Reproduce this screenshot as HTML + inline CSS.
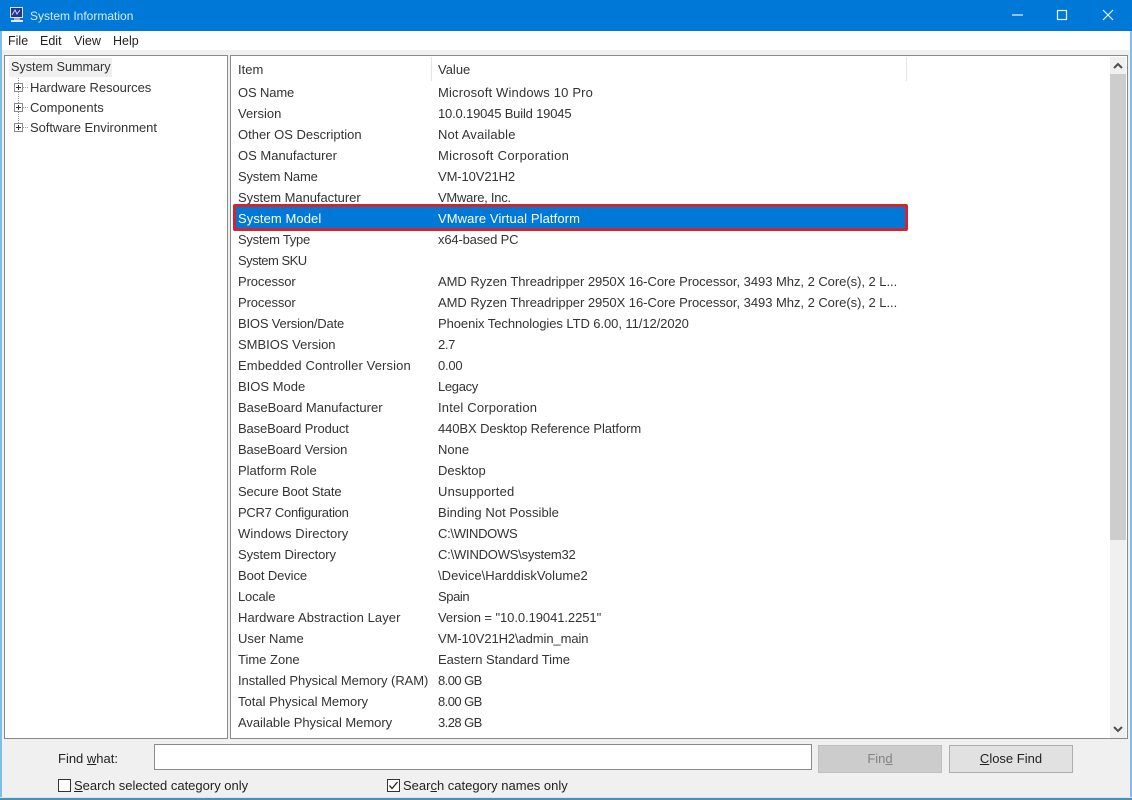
<!DOCTYPE html>
<html><head><meta charset="utf-8"><title>System Information</title>
<style>
*{box-sizing:border-box}
html,body{margin:0;padding:0;width:1132px;height:800px;overflow:hidden;background:#f0f0f0;font-family:"Liberation Sans",sans-serif;font-size:13px;color:#333}
.a{position:absolute;white-space:nowrap}
.t{position:absolute;white-space:nowrap;line-height:21px;height:21px}
.c1{left:238px}.c2{left:438px}
u{text-decoration:underline}
</style></head>
<body>
<div class="a" style="left:0;top:0;width:1132px;height:800px;background:#f0f0f0"></div>
<div class="a" style="left:0;top:0;width:1132px;height:31px;background:#0078d7"></div>
<svg class="a" style="left:9px;top:6px" width="16" height="18" viewBox="0 0 16 18">
<rect x="1" y="1" width="13" height="11" fill="#dfe3f2"/><rect x="2" y="2" width="11" height="9" fill="#26338f"/><path d="M3 9L6 4L8 8L11 4" stroke="#c8d0f0" fill="none"/><rect x="5" y="12" width="6" height="2" fill="#9fb0d0"/><rect x="2" y="14" width="12" height="2" fill="#e6e8f0"/>
</svg>
<div class="a" style="left:30px;top:8px;color:#d8ecfb;font-size:12px;line-height:16px">System Information</div>
<svg class="a" style="left:1000px;top:0" width="132" height="31" fill="none" stroke="#e8f4fc" stroke-width="1.2">
<path d="M12 15H23"/><rect x="57.5" y="10.5" width="9" height="9"/><path d="M103 10L113 20M113 10L103 20"/>
</svg>
<div class="a" style="left:2px;top:31px;width:1128px;height:19px;background:#fff"></div>
<div class="a" style="left:8px;top:33px;line-height:16px;color:#222;font-size:12.5px">File</div>
<div class="a" style="left:40px;top:33px;line-height:16px;color:#222;font-size:12.5px">Edit</div>
<div class="a" style="left:74px;top:33px;line-height:16px;color:#222;font-size:12.5px">View</div>
<div class="a" style="left:113px;top:33px;line-height:16px;color:#222;font-size:12.5px">Help</div>
<div class="a" style="left:0;top:31px;width:2px;height:769px;background:#7fbce8"></div>
<div class="a" style="left:1130px;top:31px;width:2px;height:769px;background:#7fbce8"></div>
<div class="a" style="left:0;top:797px;width:1132px;height:1px;background:#cfeaf8"></div>
<div class="a" style="left:0;top:798px;width:1132px;height:2px;background:#4d8fb0"></div>

<div class="a" style="left:4px;top:55px;width:224px;height:684px;background:#fff;border:1px solid #8a8a8a"></div>
<div class="a" style="left:9px;top:58px;width:103px;height:19px;background:#f0f0f0"></div>
<div class="a" style="left:11px;top:59px;line-height:17px;letter-spacing:-.04px;font-size:12.7px">System Summary</div>
<svg class="a" style="left:13px;top:77px" width="18" height="56" fill="none" shape-rendering="crispEdges">
<path d="M5.5 1V50" stroke="#999" stroke-dasharray="1 1"/>
<path d="M10 10.5H16M10 30.5H16M10 50.5H16" stroke="#999" stroke-dasharray="1 1"/>
<g stroke="#8a8a8a" fill="#fff"><rect x="1.5" y="6.5" width="8" height="8"/><rect x="1.5" y="26.5" width="8" height="8"/><rect x="1.5" y="46.5" width="8" height="8"/></g>
<path d="M3 10.5H8M5.5 8V13M3 30.5H8M5.5 28V33M3 50.5H8M5.5 48V53" stroke="#333"/>
</svg>
<div class="a" style="left:30px;top:79px;line-height:17px;letter-spacing:-.05px">Hardware Resources</div>
<div class="a" style="left:30px;top:99px;line-height:17px">Components</div>
<div class="a" style="left:30px;top:119px;line-height:17px;letter-spacing:-.05px">Software Environment</div>

<div class="a" style="left:230px;top:55px;width:898px;height:684px;background:#fff;border:1px solid #8a8a8a"></div>
<div class="a" style="left:431px;top:57px;width:1px;height:24px;background:#e5e5e5"></div>
<div class="a" style="left:906px;top:57px;width:1px;height:24px;background:#e5e5e5"></div>
<div class="t c1" style="top:59px">Item</div><div class="t c2" style="top:59px">Value</div>

<div class="t c1" style="top:82px;letter-spacing:-.14px">OS Name</div><div class="t c2" style="top:82px;letter-spacing:.17px">Microsoft Windows 10 Pro</div>
<div class="t c1" style="top:103px">Version</div><div class="t c2" style="top:103px;letter-spacing:-.18px">10.0.19045 Build 19045</div>
<div class="t c1" style="top:124px">Other OS Description</div><div class="t c2" style="top:124px;letter-spacing:.15px">Not Available</div>
<div class="t c1" style="top:145px">OS Manufacturer</div><div class="t c2" style="top:145px;letter-spacing:.33px">Microsoft Corporation</div>
<div class="t c1" style="top:166px;letter-spacing:-.18px">System Name</div><div class="t c2" style="top:166px;letter-spacing:-.1px">VM-10V21H2</div>
<div class="t c1" style="top:187px;letter-spacing:-.05px">System Manufacturer</div><div class="t c2" style="top:187px;letter-spacing:-.25px">VMware, Inc.</div>
<div class="a" style="left:233px;top:204px;width:675px;height:27px;background:#0078d7;border:3px solid #d2232e;border-radius:2px"></div>
<div class="t c1" style="top:208px;color:#fff;letter-spacing:.08px">System Model</div><div class="t c2" style="top:208px;color:#fff;letter-spacing:.09px">VMware Virtual Platform</div>
<div class="t c1" style="top:229px;letter-spacing:-.27px">System Type</div><div class="t c2" style="top:229px;letter-spacing:-.17px">x64-based PC</div>
<div class="t c1" style="top:250px;letter-spacing:-.5px">System SKU</div>
<div class="t c1" style="top:271px;letter-spacing:-.1px">Processor</div><div class="t c2" style="top:271px;letter-spacing:-.04px">AMD Ryzen Threadripper 2950X 16-Core Processor, 3493 Mhz, 2 Core(s), 2 L...</div>
<div class="t c1" style="top:292px;letter-spacing:-.1px">Processor</div><div class="t c2" style="top:292px;letter-spacing:-.04px">AMD Ryzen Threadripper 2950X 16-Core Processor, 3493 Mhz, 2 Core(s), 2 L...</div>
<div class="t c1" style="top:313px;letter-spacing:-.18px">BIOS Version/Date</div><div class="t c2" style="top:313px;letter-spacing:-.07px">Phoenix Technologies LTD 6.00, 11/12/2020</div>
<div class="t c1" style="top:334px">SMBIOS Version</div><div class="t c2" style="top:334px;letter-spacing:-.33px">2.7</div>
<div class="t c1" style="top:355px;letter-spacing:.11px">Embedded Controller Version</div><div class="t c2" style="top:355px;letter-spacing:-.25px">0.00</div>
<div class="t c1" style="top:376px">BIOS Mode</div><div class="t c2" style="top:376px;letter-spacing:-.33px">Legacy</div>
<div class="t c1" style="top:397px">BaseBoard Manufacturer</div><div class="t c2" style="top:397px;letter-spacing:.18px">Intel Corporation</div>
<div class="t c1" style="top:418px;letter-spacing:-.12px">BaseBoard Product</div><div class="t c2" style="top:418px;letter-spacing:-.09px">440BX Desktop Reference Platform</div>
<div class="t c1" style="top:439px;letter-spacing:-.12px">BaseBoard Version</div><div class="t c2" style="top:439px">None</div>
<div class="t c1" style="top:460px">Platform Role</div><div class="t c2" style="top:460px">Desktop</div>
<div class="t c1" style="top:481px;letter-spacing:-.12px">Secure Boot State</div><div class="t c2" style="top:481px;letter-spacing:.18px">Unsupported</div>
<div class="t c1" style="top:502px;letter-spacing:-.28px">PCR7 Configuration</div><div class="t c2" style="top:502px;letter-spacing:.05px">Binding Not Possible</div>
<div class="t c1" style="top:523px;letter-spacing:.12px">Windows Directory</div><div class="t c2" style="top:523px;letter-spacing:-.3px">C:\WINDOWS</div>
<div class="t c1" style="top:544px;letter-spacing:-.06px">System Directory</div><div class="t c2" style="top:544px;letter-spacing:-.21px">C:\WINDOWS\system32</div>
<div class="t c1" style="top:565px;letter-spacing:-.1px">Boot Device</div><div class="t c2" style="top:565px;letter-spacing:.04px">\Device\HarddiskVolume2</div>
<div class="t c1" style="top:586px;letter-spacing:-.17px">Locale</div><div class="t c2" style="top:586px;letter-spacing:-.4px">Spain</div>
<div class="t c1" style="top:607px;letter-spacing:.08px">Hardware Abstraction Layer</div><div class="t c2" style="top:607px;letter-spacing:-.07px">Version = "10.0.19041.2251"</div>
<div class="t c1" style="top:628px">User Name</div><div class="t c2" style="top:628px;letter-spacing:-.1px">VM-10V21H2\admin_main</div>
<div class="t c1" style="top:649px">Time Zone</div><div class="t c2" style="top:649px;letter-spacing:-.05px">Eastern Standard Time</div>
<div class="t c1" style="top:670px;letter-spacing:-.06px">Installed Physical Memory (RAM)</div><div class="t c2" style="top:670px;letter-spacing:-.57px">8.00 GB</div>
<div class="t c1" style="top:691px">Total Physical Memory</div><div class="t c2" style="top:691px;letter-spacing:-.57px">8.00 GB</div>
<div class="t c1" style="top:712px;letter-spacing:-.04px">Available Physical Memory</div><div class="t c2" style="top:712px;letter-spacing:-.57px">3.28 GB</div>

<div class="a" style="left:1110px;top:57px;width:16px;height:681px;background:#f0f0f0"></div>
<div class="a" style="left:1110px;top:74px;width:16px;height:466px;background:#cdcdcd"></div>
<svg class="a" style="left:1110px;top:57px" width="16" height="681" fill="none" stroke="#505050" stroke-width="2">
<path d="M4 11L8 7L12 11"/><path d="M4 670L8 674L12 670"/>
</svg>

<div class="a" style="left:58px;top:751px;line-height:16px;color:#222">Find <u>w</u>hat:</div>
<div class="a" style="left:154px;top:744px;width:658px;height:26px;background:#fff;border:1px solid #8a8a8a"></div>
<div class="a" style="left:818px;top:745px;width:124px;height:28px;background:#cccccc;border:1px solid #bfbfbf;text-align:center;line-height:26px;color:#838383">Fin<u>d</u></div>
<div class="a" style="left:949px;top:745px;width:124px;height:28px;background:#e1e1e1;border:1px solid #adadad;text-align:center;line-height:26px;color:#222"><u>C</u>lose Find</div>

<div class="a" style="left:58px;top:779px;width:13px;height:13px;background:#fff;border:1px solid #333"></div>
<div class="a" style="left:74px;top:777px;line-height:17px;color:#222"><u>S</u>earch selected category only</div>
<div class="a" style="left:387px;top:779px;width:13px;height:13px;background:#fff;border:1px solid #333"></div>
<svg class="a" style="left:387px;top:779px" width="13" height="13" fill="none" stroke="#222" stroke-width="1.3"><path d="M2.5 6.5L5 9.5L10.5 3"/></svg>
<div class="a" style="left:403px;top:777px;line-height:17px;color:#222">Sear<u>c</u>h category names only</div>
</body></html>
